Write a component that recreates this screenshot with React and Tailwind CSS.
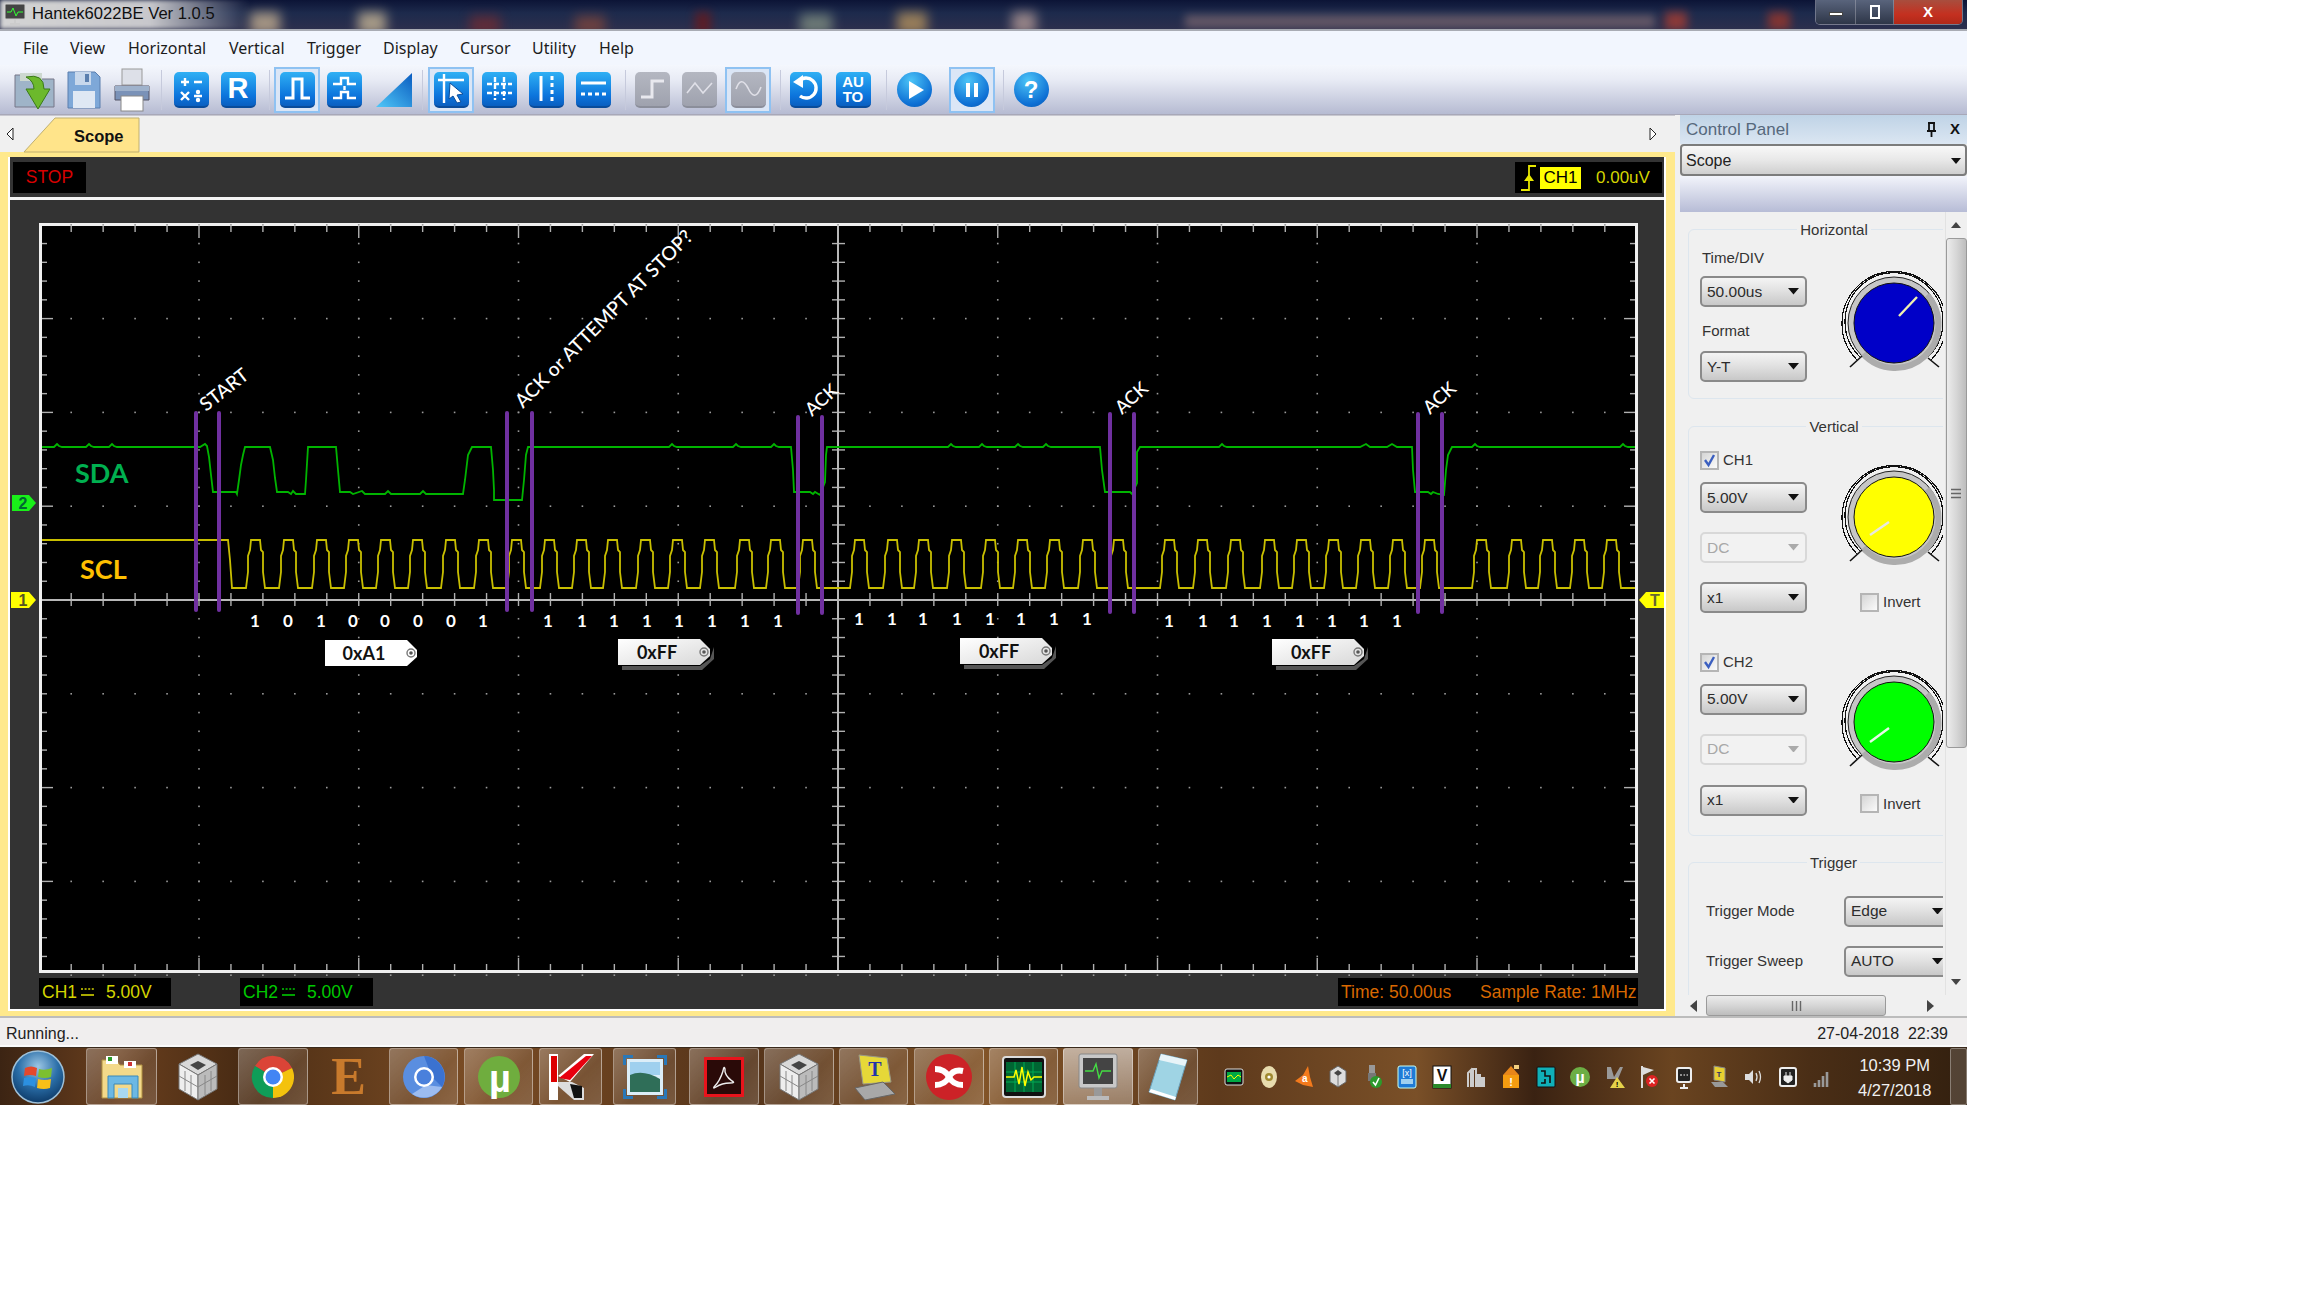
import React from "react";

const Arrow = ({ c = "#111", s = 14 }) => (
  <svg width={s} height={s * 0.6} viewBox="0 0 10 6" className="shrink-0"><polygon points="0,0 10,0 5,6" fill={c} /></svg>
);

const Sel = ({ label, disabled, w = "w-[107px]" }) => (
  <div className={`${w} h-[31px] shrink-0 flex items-center justify-between pl-[5px] pr-[6px] rounded-[5px] border-2 text-[15.5px] ${disabled ? "border-[#d8d8d8] bg-[#f2f2f2] text-[#a8a8a8]" : "border-[#8a8a8a] bg-[linear-gradient(#f4f4f4,#e2e2e2_45%,#c8c8c8)] text-[#2c2c2c]"}`}>
    <span>{label}</span>
    <Arrow c={disabled ? "#aaa" : "#111"} s={11} />
  </div>
);

const Check = ({ on }) => (
  <div className="w-[19px] h-[19px] shrink-0 border-2 border-[#b5b5b5] bg-[linear-gradient(135deg,#d5d5d5,#fbfbfb)] flex items-center justify-center">
    {on && <svg width="15" height="15" viewBox="0 0 15 15"><path d="M3 7 L6.5 12 L12 2" fill="none" stroke="#3b5fc0" strokeWidth="2.4" /></svg>}
  </div>
);

const Knob = ({ color, px1, py1, px2, py2, pc = "#f1f1f1" }) => (
  <svg width="116" height="116" viewBox="-58 -58 116 116" className="block shrink-0">
    <g fill="none" shapeRendering="crispEdges">
      <path d="M-34 34 A49 49 0 1 1 34 34" stroke="#111" strokeWidth="1.2" />
      <path d="M-37 37 A52 52 0 1 1 37 37" stroke="#111" strokeWidth="1.2" />
    </g>
    <circle r="46" fill="#c6c6c6" stroke="#222" strokeWidth="1" />
    <path d="M-31 31 A43 43 0 0 0 33 -28" fill="none" stroke="#acacac" strokeWidth="6" />
    <circle r="40" fill={color} stroke="#111" strokeWidth="1" />
    <line x1="-32" y1="33" x2="-44" y2="44" stroke="#111" strokeWidth="1.6" />
    <line x1="34" y1="35" x2="45" y2="44" stroke="#111" strokeWidth="1.6" />
    <line x1={px1} y1={py1} x2={px2} y2={py2} stroke={pc} strokeWidth="2.4" />
  </svg>
);

const Blue = ({ children, gray }) => (
  <div className={`w-[35px] h-[36px] rounded-[5px] flex items-center justify-center border-b-2 ${gray ? "bg-[linear-gradient(#b4b7c1,#9fa2ae)] border-[#8b8e9a]" : "bg-[linear-gradient(#2fb0f4,#0c74dc_70%,#0a5fc0)] border-[#0a4c9a]"}`}>
    {children}
  </div>
);
const I = ({ children }) => <svg width="31" height="31" viewBox="0 0 31 31" fill="none" stroke="#fff" strokeWidth="2.4">{children}</svg>;
const Frame = ({ children }) => (
  <div className="w-[46px] h-[46px] shrink-0 border-2 border-[#8fc2f2] bg-[#dbe6f6] flex items-center justify-center">{children}</div>
);
const Sep = ({ w }) => <div className={`${w} shrink-0 flex justify-center`}><div className="w-px h-[40px] bg-[#c6cadc]" /></div>;
const Slot = ({ w, children }) => <div className={`${w} shrink-0 flex justify-center`}>{children}</div>;

const Orb = ({ children }) => (
  <div className="w-[35px] h-[35px] rounded-full bg-[radial-gradient(circle_at_40%_25%,#4cc4f7,#0d6fd4_70%,#0a55a8)] flex items-center justify-center">{children}</div>
);

const majorYs = [-4, -3, -2, -1, 0, 1, 2, 3, 4].map((k) => 600 + k * 93.8);
const minorYs = Array.from({ length: 41 }, (_, i) => 600 + (i - 20) * 18.76).filter((y) => y > 226 && y < 970);
const majorXs = Array.from({ length: 11 }, (_, i) => 838 + (i - 5) * 159.75).filter((x) => x > 42 && x < 1635);
const minorXs = Array.from({ length: 51 }, (_, i) => 838 + (i - 25) * 31.95).filter((x) => x > 42 && x < 1635);

const sclCenters = [256, 289, 322, 354, 386, 418, 451, 484, 517, 550, 582, 613, 646, 678, 710, 745, 776, 808, 860, 893, 924, 957, 991, 1023, 1055, 1088, 1119, 1170, 1203, 1236, 1270, 1302, 1334, 1366, 1398, 1430, 1482, 1517, 1548, 1580, 1612];
const scl = "M42 540 L228 540 L230 560 L232 588 " + sclCenters.map((c) => `L${c - 10} 588 L${c - 8} 572 L${c - 8} 556 L${c - 6} 550 L${c - 5} 540 L${c + 4} 540 L${c + 5} 550 L${c + 7} 552 L${c + 7} 572 L${c + 9} 588`).join(" ") + " L1635 588";
const b = (x) => `L${x - 4} 447 L${x - 1} 444 L${x + 1} 446 L${x + 4} 447`;
const sda = `M42 447 ${b(58)} ${b(90)} ${b(113)} L200 447 L205 444 L207 446 L209 457 L211 475 L213 492 L236 492 L237 494 L239 480 L241 465 L243 455 L245 447 L270 447 L273 460 L275 478 L277 492 L288 492 L291 494 L293 491 L296 494 L305 494 L306 480 L308 447 L336 447 L338 470 L340 492 L350 492 L353 494 L362 491 L365 494 L385 494 L388 491 L391 494 L420 494 L423 491 L426 494 L463 494 L465 480 L468 455 L472 447 L491 447 L493 470 L494 490 L494 500 L522 500 L524 480 L526 455 L528 447 ${b(673)} ${b(737)} ${b(775)} L791 447 L793 470 L794 492 L810 492 L813 494 L815 492 L820 495 L825 482 L826 455 L827 447 ${b(952)} ${b(983)} ${b(1019)} ${b(1047)} L1100 447 L1102 470 L1105 492 L1130 492 L1132 494 L1137 483 L1137 452 L1140 447 ${b(1223)} L1360 447 L1366 444 L1370 447 L1387 447 L1392 444 L1397 447 L1412 447 L1413 470 L1415 492 L1428 492 L1431 494 L1433 492 L1438 494 L1444 495 L1446 470 L1448 455 L1452 447 ${b(1476)} ${b(1624)} L1635 447`;

const digits = [
  ...[[255, "1"], [288, "0"], [321, "1"], [353, "0"], [385, "0"], [418, "0"], [451, "0"], [483, "1"]].map(([x, t]) => [x, 627, t]),
  ...[548, 582, 614, 647, 679, 712, 745, 778].map((x) => [x, 627, "1"]),
  ...[859, 892, 923, 957, 990, 1021, 1054, 1087].map((x) => [x, 625, "1"]),
  ...[1169, 1203, 1234, 1267, 1300, 1332, 1364, 1397].map((x) => [x, 627, "1"]),
];

const purple = [[196, 413, 610], [219, 413, 610], [507, 413, 610], [532, 413, 610], [798, 417, 613], [822, 417, 613], [1110, 414, 612], [1134, 414, 612], [1418, 414, 612], [1442, 414, 612]];

const Tag = ({ x, y, t, shadow }) => (
  <g>
    {shadow && <polygon points={`${x + 4},${y + 27} ${x + 4},${y + 31} ${x + 84},${y + 31} ${x + 96},${y + 20} ${x + 96},${y + 8} ${x + 92},${y + 20} ${x + 82},${y + 27}`} fill="#555" />}
    <polygon points={`${x},${y} ${x + 82},${y} ${x + 92},${y + 10} ${x + 92},${y + 17} ${x + 82},${y + 26} ${x},${y + 26}`} fill={shadow ? "url(#tagg)" : "#fff"} />
    <circle cx={x + 86} cy={y + 13} r="4" fill="none" stroke="#777" strokeWidth="1.4" />
    <circle cx={x + 86} cy={y + 13} r="1.8" fill="#555" />
    <text x={x + 39} y={y + 19.5} textAnchor="middle" fill="#111" className="font-['Lato',sans-serif] font-bold text-[18px]">{t}</text>
  </g>
);

const Scope = () => (
  <svg viewBox="42 226 1593 744" className="block w-[1593px] h-[744px] overflow-visible bg-black">
    <defs>
      <linearGradient id="tagg" x1="0" x2="1" y1="0" y2="1"><stop offset="0" stopColor="#fff" /><stop offset="1" stopColor="#d8d8d8" /></linearGradient>
    </defs>
    {majorYs.map((y) => minorXs.map((x) => <rect key={`a${x}${y}`} x={x - 0.8} y={y - 0.8} width="1.6" height="1.6" fill="#9a9a9a" />))}
    {majorXs.map((x) => minorYs.map((y) => <rect key={`b${x}${y}`} x={x - 0.8} y={y - 0.8} width="1.6" height="1.6" fill="#9a9a9a" />))}
    {minorXs.map((x) => {
      const major = Math.abs(((x - 838) / 31.95) % 5) < 0.01;
      const l = major ? 12 : 6;
      return (
        <g key={x} stroke="#b0b0b0" strokeWidth="1.4">
          <line x1={x} x2={x} y1={226} y2={226 + l} />
          <line x1={x} x2={x} y1={970 - l} y2={970} />
          <line x1={x} x2={x} y1={593} y2={606} />
        </g>
      );
    })}
    {minorYs.map((y) => {
      const major = Math.abs(((y - 600) / 18.76) % 5) < 0.01;
      const l = major ? 11 : 5;
      return (
        <g key={y} stroke="#b0b0b0" strokeWidth="1.4">
          <line y1={y} y2={y} x1={42} x2={42 + l} />
          <line y1={y} y2={y} x1={1635 - l} x2={1635} />
          <line y1={y} y2={y} x1={832} x2={845} />
        </g>
      );
    })}
    <line x1="42" x2="1635" y1="600" y2="600" stroke="#b8b8b8" strokeWidth="2" />
    <line x1="838" x2="838" y1="226" y2="970" stroke="#b8b8b8" strokeWidth="2" />

    <path d={scl} fill="none" stroke="#c8be00" strokeWidth="1.8" />
    <path d={sda} fill="none" stroke="#00b400" strokeWidth="1.8" />

    {purple.map(([x, a, c]) => <line key={x} x1={x} x2={x} y1={a} y2={c} stroke="#7030a0" strokeWidth="4" strokeLinecap="round" />)}

    <g className="font-['Lato',sans-serif]">
      <text x="75" y="483" fill="#00b050" className="font-bold text-[27px]">SDA</text>
      <text x="80" y="579" fill="#ffc000" className="font-bold text-[27px]">SCL</text>
      <text transform="translate(206 412) rotate(-38)" fill="#fff" className="font-medium text-[19px]">START</text>
      <text transform="translate(523 409) rotate(-45)" fill="#fff" className="font-medium text-[19.4px]">ACK or ATTEMPT AT STOP?</text>
      <text transform="translate(812 417) rotate(-42)" fill="#fff" className="font-medium text-[18.5px]">ACK</text>
      <text transform="translate(1122 415) rotate(-42)" fill="#fff" className="font-medium text-[18.5px]">ACK</text>
      <text transform="translate(1430 415) rotate(-42)" fill="#fff" className="font-medium text-[18.5px]">ACK</text>
      {digits.map(([x, y, t], i) => <text key={i} x={x} y={y} textAnchor="middle" fill="#fff" className="font-bold text-[17px]">{t}</text>)}
    </g>

    <Tag x={325} y={640} t="0xA1" />
    <Tag x={618} y={639} t="0xFF" shadow />
    <Tag x={960} y={638} t="0xFF" shadow />
    <Tag x={1272} y={639} t="0xFF" shadow />

    <g className="font-['Liberation_Sans',sans-serif] text-[16px] font-bold">
      <polygon points="12,495 29,495 36,503 29,511 12,511" fill="#19f019" />
      <text x="23" y="509" textAnchor="middle" fill="#063">2</text>
      <polygon points="11,592 29,592 36,600 29,608 11,608" fill="#ffff00" />
      <text x="23" y="606" textAnchor="middle" fill="#552">1</text>
      <polygon points="1664,592 1646,592 1639,600 1646,608 1664,608" fill="#ffff00" />
      <text x="1655" y="606" textAnchor="middle" fill="#663">T</text>
    </g>
  </svg>
);

const Dc = ({ c }) => (
  <svg width="15" height="10" viewBox="0 0 15 10" className="mx-[3px]">
    <path d="M1 2 H14" stroke={c} strokeWidth="1.6" strokeDasharray="2 1.6" /><path d="M1 8 H14" stroke={c} strokeWidth="1.6" />
  </svg>
);

const TaskBtn = ({ w, children, lit }) => (
  <div className={`${w} h-[57px] shrink-0 rounded-[3px] border border-[#ffffff60] flex items-center justify-center ${lit ? "bg-[linear-gradient(#ffffff90,#ffffff50)]" : "bg-[linear-gradient(135deg,#ffffff48,#ffffff18_60%,#ffffff28)]"}`}>{children}</div>
);

const Cube = () => (
  <svg width="42" height="48" viewBox="0 0 42 48">
    <polygon points="21,1 40,11 21,22 2,11" fill="#d8d8d8" stroke="#777" />
    <polygon points="2,11 21,22 21,47 2,36" fill="#eee" stroke="#777" />
    <polygon points="40,11 21,22 21,47 40,36" fill="#bbb" stroke="#777" />
    <polygon points="21,8 29,12 21,17 13,12" fill="#444" />
    <path d="M8 18 V38 M14 22 V42 M28 22 V42 M34 18 V38 M2 23 L21 34 L40 23" stroke="#888" strokeWidth="1" fill="none" />
  </svg>
);

const TB = ({ children, w = 20 }) => <svg width={w} height="24" viewBox="0 0 20 24">{children}</svg>;
const tray = [
  <TB><rect x="1" y="4" width="18" height="16" rx="2" fill="#111" stroke="#ddd" /><rect x="3" y="7" width="14" height="10" fill="#0a4" /><path d="M3 12 L7 10 L10 14 L14 10 L17 12" stroke="#ff0" fill="none" /></TB>,
  <TB><ellipse cx="10" cy="12" rx="8" ry="11" fill="#e8dcae" /><circle cx="10" cy="12" r="4" fill="#a08a30" /><circle cx="10" cy="12" r="1.6" fill="#fff" /></TB>,
  <TB><path d="M2 16 L10 10 L15 1 L17 12 L20 22 L10 20 Z" fill="#f47a1c" /><text x="9" y="17" fontSize="10" fill="#fff" fontWeight="700">a</text></TB>,
  <TB><polygon points="10,1 18,6 18,17 10,22 2,17 2,6" fill="#ddd" stroke="#666" /><polygon points="10,5 14,8 10,11 6,8" fill="#444" /><path d="M10 11 V22" stroke="#777" /></TB>,
  <TB><rect x="6" y="0" width="6" height="13" fill="#999" /><rect x="5" y="8" width="8" height="8" fill="#777" /><circle cx="13" cy="17" r="6" fill="#2c9a2c" /><path d="M10 17 L12.5 20 L16 13" stroke="#fff" strokeWidth="1.6" fill="none" /></TB>,
  <TB><rect x="1" y="1" width="18" height="22" rx="2" fill="#1f7bd6" stroke="#cfe" /><text x="10" y="11" textAnchor="middle" fontSize="9" fill="#fff">[x]</text><rect x="4" y="14" width="12" height="5" fill="#a0d0f0" /></TB>,
  <TB><rect x="1" y="1" width="18" height="22" fill="#fff" stroke="#111" /><text x="10" y="16" textAnchor="middle" fontSize="16" fontWeight="700" fill="#111">V</text><rect x="1" y="19" width="18" height="4" fill="#2a8a2a" /></TB>,
  <TB><path d="M2 22 V8 L5 5 V22 M7 22 V4 H10 V22 M12 22 V10 H14 V22 M16 22 V13 H18 V22" stroke="#ccc" strokeWidth="2" fill="none" /></TB>,
  <TB><rect x="2" y="10" width="16" height="13" fill="#f59c10" /><polygon points="10,1 18,10 2,10" fill="#e8861a" /><rect x="13" y="0" width="5" height="4" fill="#f4d080" /><text x="10" y="21" textAnchor="middle" fontSize="11" fontWeight="700" fill="#fff">!</text></TB>,
  <TB><rect x="1" y="2" width="18" height="20" rx="1" fill="#10b0b8" stroke="#111" /><path d="M5 6 H9 V11 H14 V18 M5 18 H9 V14" stroke="#111" strokeWidth="1.6" fill="none" /></TB>,
  <TB><circle cx="10" cy="12" r="10" fill="#6cae44" /><text x="10" y="18" textAnchor="middle" fontSize="16" fontWeight="700" fill="#fff">µ</text></TB>,
  <TB><path d="M2 2 H6 L9 12 L15 2 H18 L13 14 H2 Z" fill="#999" /><polygon points="12,12 20,23 5,23" fill="#e6d24a" /><text x="12" y="22" textAnchor="middle" fontSize="8" fontWeight="700">!</text></TB>,
  <TB><path d="M3 1 V23" stroke="#ddd" strokeWidth="2" /><polygon points="4,2 15,5 4,10" fill="#ddd" /><circle cx="13" cy="16" r="6" fill="#d22" /><path d="M10.5 13.5 L15.5 18.5 M15.5 13.5 L10.5 18.5" stroke="#fff" strokeWidth="1.6" /></TB>,
  <TB><rect x="3" y="3" width="14" height="14" rx="2" fill="#222" stroke="#eee" strokeWidth="2" /><path d="M6 10 H8 M9.5 10 H11 M12.5 10 H14" stroke="#fff" /><path d="M10 19 V23 M6 23 H14" stroke="#eee" strokeWidth="2" /></TB>,
  <TB><polygon points="5,1 16,3 16,17 5,15" fill="#e8d030" stroke="#888" /><polygon points="2,17 14,17 19,22 6,22" fill="#999" /><text x="10" y="12" textAnchor="middle" fontSize="8" fontWeight="700" fill="#336">T</text></TB>,
  <TB><polygon points="2,9 6,9 10,5 10,19 6,15 2,15" fill="#ddd" /><path d="M13 8 Q15 12 13 16 M16 6 Q19 12 16 18" stroke="#ddd" strokeWidth="1.3" fill="none" /></TB>,
  <TB><rect x="2" y="3" width="16" height="18" rx="2" fill="#222" stroke="#eee" strokeWidth="2" /><path d="M8 7 V11 M12 7 V11 M6 11 H14 V15 L10 18 L6 15 Z" fill="#eee" stroke="#eee" /></TB>,
  <TB><path d="M3 22 V18 M7 22 V15 M11 22 V11 M15 22 V7" stroke="#999" strokeWidth="2.6" /></TB>,
];

export default function App() {
  return (
    <div className="w-[2304px] h-[1296px] bg-white overflow-hidden font-['Liberation_Sans',sans-serif]">
      <div className="w-[1967px] flex flex-col">
        {/* title bar */}
        <div className="relative h-[31px] shrink-0 flex overflow-hidden border-b-2 border-[#a9acb4] bg-[linear-gradient(#0c1436,#1d2a4c_45%,#2c2f4d)]">
          <div className="absolute left-0 top-0 h-full w-[250px] bg-[linear-gradient(90deg,#d4d4d4,#c8c8cc_60%,#c8c8cc00)] blur-[2px]" />
          <div className="absolute left-[250px] top-[12px] w-[30px] h-[22px] bg-[#d9c09a] blur-[6px] opacity-70" />
          <div className="absolute left-[358px] top-[12px] w-[28px] h-[22px] bg-[#dcc8a0] blur-[6px] opacity-70" />
          <div className="absolute left-[470px] top-[16px] w-[30px] h-[18px] bg-[#7a2c30] blur-[6px] opacity-70" />
          <div className="absolute left-[575px] top-[16px] w-[30px] h-[18px] bg-[#8a4a3a] blur-[6px] opacity-70" />
          <div className="absolute left-[695px] top-[12px] w-[16px] h-[22px] bg-[#701818] blur-[5px] opacity-70" />
          <div className="absolute left-[800px] top-[14px] w-[32px] h-[20px] bg-[#8a9a88] blur-[6px] opacity-70" />
          <div className="absolute left-[897px] top-[12px] w-[30px] h-[22px] bg-[#c8a060] blur-[6px] opacity-70" />
          <div className="absolute left-[1012px] top-[12px] w-[24px] h-[22px] bg-[#c4a8a0] blur-[6px] opacity-70" />
          <div className="absolute left-[1185px] top-[15px] w-[470px] h-[13px] bg-[#8e7478] blur-[4px] opacity-60" />
          <div className="absolute left-[1665px] top-[12px] w-[22px] h-[18px] bg-[#b84030] blur-[5px] opacity-70" />
          <div className="absolute left-[1768px] top-[12px] w-[22px] h-[18px] bg-[#a83828] blur-[5px] opacity-70" />
          <div className="relative flex items-center pl-[3px] gap-[5px]">
            <svg width="24" height="26" viewBox="0 0 24 26"><rect x="2" y="2" width="20" height="15" rx="1" fill="#444" stroke="#ccc" /><path d="M4 10 L8 10 L10 6 L13 14 L15 10 L20 10" stroke="#3f3" fill="none" /><path d="M12 17 V21 M7 22 H17" stroke="#ccc" strokeWidth="2" /></svg>
            <span className="text-[16.6px] text-[#101010]">Hantek6022BE Ver 1.0.5</span>
          </div>
          <div className="relative ml-auto mr-[4px] flex h-[25px] rounded-b-[5px] border border-t-0 border-[#c4c4cc80] overflow-hidden">
            <div className="w-[40px] flex items-center justify-center bg-[linear-gradient(#59647c,#2e3648)] border-r border-[#c4c4cc60]"><div className="w-[14px] h-[4px] mt-[4px] bg-white border border-[#444]" /></div>
            <div className="w-[38px] flex items-center justify-center bg-[linear-gradient(#59647c,#2e3648)] border-r border-[#c4c4cc60]"><div className="w-[10px] h-[14px] border-2 border-white" /></div>
            <div className="w-[68px] flex items-center justify-center bg-[linear-gradient(#a84e3e,#c43020_60%,#b02818)] text-white font-bold text-[15px]">X</div>
          </div>
        </div>

        {/* menu */}
        <div className="h-[34px] shrink-0 flex items-center pl-[23px] bg-[#f2f6fe] text-[16px] text-[#1c1c1c] font-['Noto_Sans',sans-serif]">
          <span className="w-[47px]">File</span>
          <span className="w-[58px]">View</span>
          <span className="w-[101px]">Horizontal</span>
          <span className="w-[78px]">Vertical</span>
          <span className="w-[76px]">Trigger</span>
          <span className="w-[77px]">Display</span>
          <span className="w-[72px]">Cursor</span>
          <span className="w-[67px]">Utility</span>
          <span>Help</span>
        </div>

        {/* toolbar */}
        <div className="h-[50px] shrink-0 flex items-center pl-[10px] border-b border-[#a8a8b8] bg-[linear-gradient(#f4f7fd,#e8ebf5_30%,#b6bbd2)]">
          <Slot w="w-[50px]">
            <svg width="46" height="42" viewBox="0 0 46 42"><path d="M3 6 H16 L20 10 H42 V38 H3 Z" fill="#9fb4c8" stroke="#778" /><path d="M8 4 H30 V12 H8Z" fill="#cdd8d0" /><path d="M14 8 Q32 4 32 20 H38 L26 40 L14 20 H22 Q22 12 14 8 Z" fill="#6cb92c" stroke="#3a7a18" /></svg>
          </Slot>
          <Slot w="w-[48px]">
            <svg width="36" height="42" viewBox="0 0 36 42"><path d="M2 3 H29 L34 8 V39 H2 Z" fill="#7ea8d8" stroke="#5b7fae" /><rect x="9" y="3" width="16" height="13" fill="#c8d8ec" /><rect x="19" y="5" width="4" height="8" fill="#5b7fae" /><rect x="7" y="22" width="22" height="17" fill="#dfe8f4" /></svg>
          </Slot>
          <Slot w="w-[48px]">
            <svg width="40" height="44" viewBox="0 0 40 44"><rect x="10" y="1" width="20" height="16" fill="#dde0e8" stroke="#999" /><path d="M3 18 H37 V32 H3 Z" fill="#7a92b8" stroke="#556" /><rect x="3" y="18" width="34" height="5" fill="#9fb2cc" /><rect x="9" y="28" width="22" height="15" fill="#fff" stroke="#888" /></svg>
          </Slot>
          <Sep w="w-[10px]" />
          <Slot w="w-[50px]"><Blue><I><path d="M5 9 H13 M9 5 V13 M18 9 H26 M5 19 L13 27 M13 19 L5 27 M18 23 H26" /><circle cx="22" cy="19" r="1" fill="#fff" /><circle cx="22" cy="27" r="1" fill="#fff" /></I></Blue></Slot>
          <Slot w="w-[44px]"><Blue><span className="text-white font-bold text-[29px] leading-none">R</span></Blue></Slot>
          <Sep w="w-[18px]" />
          <Slot w="w-[38px]"><Frame><Blue><I><path d="M3 25 H11 V6 H20 V25 H28" strokeWidth="3" /></I></Blue></Frame></Slot>
          <Slot w="w-[56px]"><Blue><I><path d="M4 11 H12 V5 H19 V11 H27" /><path d="M15.5 13 V17" /><path d="M4 25 H12 V19 H19 V25 H27" /></I></Blue></Slot>
          <Slot w="w-[44px]">
            <svg width="38" height="36" viewBox="0 0 38 36"><defs><linearGradient id="ramp" x1="0" x2="1" y1="1" y2="0"><stop offset="0" stopColor="#50c8f8" /><stop offset="1" stopColor="#0a5cc0" /></linearGradient></defs><polygon points="1,35 37,1 37,35" fill="url(#ramp)" /></svg>
          </Slot>
          <Sep w="w-[12px]" />
          <Slot w="w-[46px]"><Frame><Blue><I><path d="M2 7 H28 M8 1 V30" strokeWidth="2.4" /><path d="M14 10 L27 21 L21 22 L25 29 L21 30 L17 23 L13 26 Z" fill="#fff" stroke="#0a4c9a" strokeWidth="1" /></I></Blue></Frame></Slot>
          <Slot w="w-[50px]"><Blue><I><path d="M11 4 V27 M20 4 V27 M3 11 H28 M3 20 H28" strokeDasharray="5 2" /></I></Blue></Slot>
          <Slot w="w-[44px]"><Blue><I><path d="M10 3 V28" strokeWidth="3" /><path d="M21 3 V28" strokeWidth="3" strokeDasharray="4 3" /></I></Blue></Slot>
          <Slot w="w-[50px]"><Blue><I><path d="M3 10 H28" strokeWidth="3" /><path d="M3 21 H28" strokeWidth="3" strokeDasharray="4 3" /></I></Blue></Slot>
          <Sep w="w-[14px]" />
          <Slot w="w-[40px]"><Blue gray><I><path d="M4 24 H15 V8 H27" stroke="#e8e8ee" strokeWidth="3" /></I></Blue></Slot>
          <Slot w="w-[54px]"><Blue gray><I><path d="M3 20 L11 10 L19 20 L28 10" stroke="#e0e0e8" strokeWidth="1.6" /></I></Blue></Slot>
          <Slot w="w-[44px]"><Frame><Blue gray><I><path d="M3 16 Q8 2 15 15 Q22 30 28 14" stroke="#e0e0e8" strokeWidth="1.6" /></I></Blue></Frame></Slot>
          <Sep w="w-[20px]" />
          <Slot w="w-[32px]"><Blue><I><path d="M8 8 A10 10 0 1 1 9 23" strokeWidth="3.4" /><polygon points="2,9 12,2 12,15" fill="#fff" stroke="none" /></I></Blue></Slot>
          <Slot w="w-[62px]"><Blue><span className="text-white font-bold text-[15px] leading-[15px] text-center">AU<br />TO</span></Blue></Slot>
          <Sep w="w-[4px]" />
          <Slot w="w-[53px]"><Orb><svg width="22" height="22" viewBox="0 0 22 22"><polygon points="5,2 20,11 5,20" fill="#fff" /></svg></Orb></Slot>
          <Slot w="w-[61px]"><Frame><Orb><svg width="18" height="18" viewBox="0 0 18 18"><rect x="3" y="2" width="4" height="14" fill="#fff" /><rect x="11" y="2" width="4" height="14" fill="#fff" /></svg></Orb></Frame></Slot>
          <Sep w="w-[2px]" />
          <Slot w="w-[54px]"><Orb><span className="text-white font-bold text-[24px] leading-none">?</span></Orb></Slot>
        </div>

        {/* main */}
        <div className="h-[903px] shrink-0 flex">
          {/* left */}
          <div className="w-[1675px] shrink-0 flex flex-col">
            <div className="relative h-[37px] shrink-0 flex items-center justify-between px-[6px] bg-[#f0f0f0] border-t border-[#c8c8d0]">
              <svg width="8" height="14" viewBox="0 0 8 14"><path d="M7 1 L1 7 L7 13 Z" fill="#fff" stroke="#222" /></svg>
              <svg width="40" height="36" viewBox="0 0 40 36" className="absolute left-[23px] bottom-0 overflow-visible"><path d="M1 36 L32 2 H116 V36 Z" fill="#ffe48a" stroke="#c0b070" /></svg>
              <span className="absolute left-[74px] top-[8px] text-[16.5px] font-bold text-[#111]">Scope</span>
              <svg width="8" height="14" viewBox="0 0 8 14" className="mr-[12px]"><path d="M1 1 L7 7 L1 13 Z" fill="#fff" stroke="#222" /></svg>
            </div>
            <div className="flex-1 flex flex-col pl-[2px] pr-[3px] border-b-2 border-[#bcbcbc] bg-[#ffe98c]">
              <div className="h-[5px] shrink-0" />
              <div className="flex-1 ml-[6px] mr-[6px] mb-[5px] flex flex-col bg-[#333] border-x-2 border-b-2 border-white">
                <div className="h-[40px] shrink-0 flex items-start justify-between pt-[5px] pl-[3px] pr-[2px]">
                  <div className="w-[73px] h-[31px] bg-black flex items-center justify-center text-[#d80000] text-[17.5px]">STOP</div>
                  <div className="w-[147px] h-[31px] bg-black flex items-center pl-[4px]">
                    <svg width="20" height="28" viewBox="0 0 20 28"><path d="M2 26 H10 V2 H17" fill="none" stroke="#e8e800" strokeWidth="1.8" /><polygon points="10,10 5,17 15,17" fill="#e8e800" /></svg>
                    <span className="ml-[1px] w-[41px] h-[22px] bg-[#ffff00] text-black text-[17px] flex items-center justify-center">CH1</span>
                    <span className="ml-[15px] text-[#d4d400] text-[17px]">0.00uV</span>
                  </div>
                </div>
                <div className="h-[3px] shrink-0 bg-[#f4f4f4]" />
                <div className="h-[23px] shrink-0" />
                <div className="ml-[29px] w-[1599px] shrink-0 border-[3px] border-[#f0f0f0]">
                  <Scope />
                </div>
                <div className="flex-1 flex items-start justify-between pt-[5px] pl-[29px] pr-[26px]">
                  <div className="flex gap-[69px]">
                    <div className="w-[132px] h-[28px] bg-black flex items-center pl-[3px] text-[17.5px] text-[#d4d400]">CH1<Dc c="#d4d400" /><span className="ml-[8px]">5.00V</span></div>
                    <div className="w-[133px] h-[28px] bg-black flex items-center pl-[3px] text-[17.5px] text-[#00c800]">CH2<Dc c="#00c800" /><span className="ml-[8px]">5.00V</span></div>
                  </div>
                  <div className="w-[300px] h-[28px] bg-black flex items-center pl-[3px] text-[17.5px] text-[#d86800]">
                    <span className="w-[139px]">Time: 50.00us</span><span>Sample Rate: 1MHz</span>
                  </div>
                </div>
              </div>
            </div>
          </div>

          {/* right panel */}
          <div className="w-[292px] shrink-0 flex flex-col pl-[5px] border-b-2 border-[#bcbcbc] bg-[#f0f0f0]">
            <div className="h-[29px] shrink-0 flex items-center justify-between pl-[6px] pr-[7px] bg-[linear-gradient(#bfd3e6,#dbe6f2)] text-[#56687c] text-[17px]">
              <span>Control Panel</span>
              <span className="flex items-center gap-[13px] text-[#111] font-bold text-[15px]">
                <svg width="11" height="15" viewBox="0 0 11 15"><path d="M2 1 H9 M3 1 V9 M8 1 V9 M1 9 H10 M5.5 9 V15" stroke="#111" strokeWidth="1.8" fill="none" /></svg>
                X
              </span>
            </div>
            <div className="h-[32px] shrink-0 flex items-center justify-between px-[4px] pt-[2px] rounded-[4px] border-2 border-[#7c7c7c] bg-[linear-gradient(#f8f8f8,#e8e8e8_50%,#cfcfcf)] text-[16px] text-[#222]">
              <span>Scope</span><Arrow s={10} />
            </div>
            <div className="h-[36px] shrink-0 bg-[linear-gradient(#f2f4fb,#b7bcd6)]" />
            <div className="h-[783px] shrink-0 flex overflow-hidden">
              <div className="w-[263px] shrink-0 overflow-hidden pl-[8px] text-[15px] text-[#333]">
                <fieldset className="mt-[9px] w-[281px] border border-[#dde6ee] rounded-[6px] pl-[11px]">
                  <legend className="mx-auto px-[3px] leading-[17px] text-[15px]">Horizontal</legend>
                  <div className="flex items-start">
                    <div className="flex flex-col w-[107px] shrink-0">
                      <div className="mt-[11px] h-[18px] leading-[18px] pl-[2px] text-[15px]">Time/DIV</div>
                      <div className="mt-[9px]"><Sel label="50.00us" /></div>
                      <div className="mt-[15px] h-[18px] leading-[18px] pl-[2px] text-[15px]">Format</div>
                      <div className="mt-[11px] mb-[16px]"><Sel label="Y-T" /></div>
                    </div>
                    <div className="ml-[29px] mt-[27px]"><Knob color="#0000c8" px1={5} py1={-7} px2={23} py2={-26} pc="#f0f0b0" /></div>
                  </div>
                </fieldset>

                <fieldset className="mt-[19px] w-[281px] border border-[#dde6ee] rounded-[6px] pl-[11px]">
                  <legend className="mx-auto px-[3px] leading-[17px] text-[15px]">Vertical</legend>
                  <div className="flex items-start mt-[16px]">
                    <div className="flex flex-col w-[107px] shrink-0">
                      <div className="flex items-center gap-[4px] h-[18px] text-[15px]"><Check on />CH1</div>
                      <div className="mt-[13px]"><Sel label="5.00V" /></div>
                      <div className="mt-[19px]"><Sel label="DC" disabled /></div>
                      <div className="mt-[19px]"><Sel label="x1" /></div>
                    </div>
                    <div className="ml-[29px] mt-[8px] flex flex-col">
                      <Knob color="#ffff00" px1={-24} py1={18} px2={-5} py2={5} pc="#e8e8e0" />
                      <div className="ml-[24px] mt-[16px] flex items-center gap-[4px] text-[15px]"><Check />Invert</div>
                    </div>
                  </div>
                  <div className="flex items-start mt-[40px] mb-[19px]">
                    <div className="flex flex-col w-[107px] shrink-0">
                      <div className="flex items-center gap-[4px] h-[18px] text-[15px]"><Check on />CH2</div>
                      <div className="mt-[12px]"><Sel label="5.00V" /></div>
                      <div className="mt-[19px]"><Sel label="DC" disabled /></div>
                      <div className="mt-[20px]"><Sel label="x1" /></div>
                    </div>
                    <div className="ml-[29px] mt-[10px] flex flex-col">
                      <Knob color="#00ff00" px1={-24} py1={20} px2={-5} py2={6} pc="#e8f8e8" />
                      <div className="ml-[24px] mt-[13px] flex items-center gap-[4px] text-[15px]"><Check />Invert</div>
                    </div>
                  </div>
                </fieldset>

                <fieldset className="mt-[18px] w-[274px] border border-[#dde6ee] rounded-[6px] pl-[17px] h-[200px]">
                  <legend className="mx-auto px-[3px] leading-[17px] text-[15px]">Trigger</legend>
                  <div className="flex items-center mt-[25px]"><span className="w-[138px] text-[15px]">Trigger Mode</span><Sel label="Edge" /></div>
                  <div className="flex items-center mt-[19px]"><span className="w-[138px] text-[15px]">Trigger Sweep</span><Sel label="AUTO" /></div>
                </fieldset>
              </div>
              <div className="w-[21px] ml-[2px] shrink-0 flex flex-col items-center bg-[#f0f0f0] border-l border-[#e2e2e2]">
                <div className="h-[26px] flex items-center"><svg width="10" height="6" viewBox="0 0 10 6"><polygon points="0,6 10,6 5,0" fill="#444" /></svg></div>
                <div className="w-[21px] h-[510px] flex items-center justify-center rounded-[3px] border border-[#9a9a9a] bg-[linear-gradient(90deg,#ececec,#d6d6d6_50%,#bdbdbd)]">
                  <svg width="10" height="11" viewBox="0 0 10 11"><path d="M0 1.5 H10 M0 5.5 H10 M0 9.5 H10" stroke="#666" strokeWidth="1.4" /></svg>
                </div>
                <div className="mt-auto h-[26px] flex items-center"><Arrow c="#444" s={10} /></div>
              </div>
            </div>
            <div className="h-[21px] shrink-0 flex items-center pl-[9px] bg-[#f0f0f0]">
              <svg width="8" height="12" viewBox="0 0 8 12"><polygon points="8,0 8,12 1,6" fill="#444" /></svg>
              <div className="ml-[9px] w-[180px] h-[21px] flex items-center justify-center rounded-[3px] border border-[#9a9a9a] bg-[linear-gradient(#ececec,#d6d6d6_50%,#bdbdbd)]">
                <svg width="11" height="10" viewBox="0 0 11 10"><path d="M1.5 0 V10 M5.5 0 V10 M9.5 0 V10" stroke="#666" strokeWidth="1.4" /></svg>
              </div>
              <svg width="8" height="12" viewBox="0 0 8 12" className="ml-[41px]"><polygon points="0,0 0,12 7,6" fill="#444" /></svg>
            </div>
          </div>
        </div>

        {/* status */}
        <div className="h-[29px] shrink-0 flex items-center justify-between pl-[6px] pr-[19px] pt-[5px] bg-[#f0eeee] border-b-2 border-[#fafafa] text-[16px] text-[#222]">
          <span>Running...</span>
          <span className="whitespace-pre">27-04-2018  22:39</span>
        </div>

        {/* taskbar */}
        <div className="h-[58px] shrink-0 flex items-center border-t border-[#3a2a1c] bg-[linear-gradient(90deg,#3c2413,#6a3f1e_6%,#4a2c14_12%,#7a4c24_24%,#55341a_38%,#825428_50%,#5e3a1c_62%,#7a5028_72%,#3a2212_78%,#6a4420_85%,#4a2e16_92%,#33200f)]">
          <div className="w-[76px] shrink-0 flex justify-center">
            <svg width="56" height="56" viewBox="0 0 56 56">
              <defs><radialGradient id="orb" cx="50%" cy="30%" r="70%"><stop offset="0" stopColor="#9cc6e4" /><stop offset="0.55" stopColor="#2a6ea8" /><stop offset="1" stopColor="#0d3a68" /></radialGradient></defs>
              <circle cx="28" cy="28" r="26" fill="url(#orb)" stroke="#9ec0d8" strokeWidth="1.5" />
              <path d="M15 19 Q21 16 27 19 L26 27 Q20 25 14 27 Z" fill="#e4482c" />
              <path d="M29 20 Q35 22 42 19 L41 28 Q35 30 28 28 Z" fill="#7cc030" />
              <path d="M14 29 Q20 27 26 29 L25 38 Q19 35 13 37 Z" fill="#2c90e0" />
              <path d="M28 30 Q34 32 41 30 L40 39 Q34 41 27 39 Z" fill="#f8c018" />
            </svg>
          </div>
          <div className="w-[10px] shrink-0" />
          <TaskBtn w="w-[71px]">
            <svg width="48" height="50" viewBox="0 0 48 50"><path d="M4 8 H18 L22 13 H44 V46 H4 Z" fill="#f3d98a" stroke="#b09040" /><rect x="8" y="4" width="12" height="8" fill="#fff" /><rect x="10" y="5" width="4" height="4" fill="#2a9a2a" /><rect x="26" y="9" width="12" height="7" fill="#fff" /><rect x="30" y="10" width="4" height="4" fill="#c33" /><path d="M10 24 H40 V46 H34 V32 H16 V46 H10 Z" fill="#6cb8e4" stroke="#3a88b8" /><rect x="20" y="36" width="10" height="10" fill="#a8d8f0" /></svg>
          </TaskBtn>
          <div className="w-[81px] shrink-0 flex justify-center"><Cube /></div>
          <TaskBtn w="w-[70px]">
            <svg width="44" height="44" viewBox="0 0 44 44">
              <path d="M22 22 L4 11 A21 21 0 0 1 41 13 Z" fill="#db4437" />
              <path d="M22 22 L41 13 A21 21 0 0 1 22 43 Z" fill="#f4c20d" />
              <path d="M22 22 L22 43 A21 21 0 0 1 4 11 Z" fill="#0f9d58" />
              <circle cx="22" cy="22" r="10" fill="#fff" /><circle cx="22" cy="22" r="7.5" fill="#4285f4" />
            </svg>
          </TaskBtn>
          <div className="w-[81px] shrink-0 flex justify-center">
            <span className="text-[52px] leading-none font-bold text-[#c87a2c] font-['Liberation_Serif',serif]">E</span>
          </div>
          <TaskBtn w="w-[69px]"><svg width="44" height="44" viewBox="0 0 44 44"><circle cx="22" cy="22" r="21" fill="#5a8ee0" /><path d="M22 1 A21 21 0 0 1 40 32 L30 22 Z" fill="#3b72d0" /><path d="M40 32 A21 21 0 0 1 10 39 L24 30 Z" fill="#9cbcf0" /><circle cx="22" cy="22" r="10" fill="#fff" /><circle cx="22" cy="22" r="7.5" fill="#4a80dc" /></svg></TaskBtn>
          <div className="w-[6px] shrink-0" />
          <TaskBtn w="w-[69px]"><svg width="44" height="44" viewBox="0 0 44 44"><circle cx="22" cy="22" r="21" fill="#6fad3e" /><text x="23" y="37" textAnchor="middle" fontSize="38" fontWeight="700" fill="#fff" className="font-['Liberation_Sans',sans-serif]">µ</text></svg></TaskBtn>
          <div className="w-[6px] shrink-0" />
          <TaskBtn w="w-[63px]"><svg width="50" height="50" viewBox="0 0 50 50"><polygon points="3,2 12,2 12,48 3,48" fill="#fff" /><polygon points="5,4 11,4 11,30 5,30" fill="#d00" /><polygon points="12,24 38,2 48,2 24,30" fill="#fff" /><polygon points="13,26 40,4 46,4 24,28" fill="#e8000e" /><polygon points="12,30 26,30 38,36 38,48 28,48 12,34" fill="#ddd" /><polygon points="24,32 36,34 36,46 28,46" fill="#111" /></svg></TaskBtn>
          <div className="w-[11px] shrink-0" />
          <TaskBtn w="w-[63px]"><svg width="44" height="44" viewBox="0 0 44 44"><rect x="4" y="4" width="36" height="36" fill="#dceef8" /><path d="M7 7 H37 V20 H7Z" fill="#9fd0ee" /><path d="M7 20 Q20 14 37 24 V37 H7Z" fill="#2f6e58" /><path d="M1 10 V1 H10 M34 1 H43 V10 M1 34 V43 H10 M34 43 H43 V34" stroke="#2a78b8" strokeWidth="4" fill="none" /></svg></TaskBtn>
          <div className="w-[13px] shrink-0" />
          <TaskBtn w="w-[70px]"><div className="w-[40px] h-[40px] bg-[#2a0a08] border-[3px] border-[#e8141c] flex items-center justify-center"><svg width="28" height="28" viewBox="0 0 28 28"><path d="M4 24 Q10 18 13 8 Q14 2 15 6 Q14 12 22 18 Q26 20 20 20 Q12 20 6 24 Q3 26 4 24 Z" fill="none" stroke="#eee" strokeWidth="1.4" /></svg></div></TaskBtn>
          <div className="w-[5px] shrink-0" />
          <TaskBtn w="w-[70px]"><Cube /></TaskBtn>
          <div className="w-[5px] shrink-0" />
          <TaskBtn w="w-[69px]"><svg width="46" height="50" viewBox="0 0 46 50"><polygon points="8,3 36,6 40,30 12,32" fill="#e6d838" stroke="#998" /><text x="24" y="24" textAnchor="middle" fontSize="20" fontWeight="700" fill="#2233aa" className="font-['Liberation_Serif',serif]">T</text><polygon points="4,36 32,30 44,42 14,48" fill="#a8a8a8" stroke="#666" /></svg></TaskBtn>
          <div className="w-[6px] shrink-0" />
          <TaskBtn w="w-[70px]"><svg width="48" height="48" viewBox="0 0 48 48"><circle cx="24" cy="24" r="23" fill="#cc2227" /><path d="M10 16 Q20 16 24 24 Q28 32 38 32 M10 32 Q20 32 24 24 Q28 16 38 18" fill="none" stroke="#fff" strokeWidth="6" /></svg></TaskBtn>
          <div className="w-[5px] shrink-0" />
          <TaskBtn w="w-[69px]"><div className="w-[44px] h-[42px] rounded-[4px] bg-[#111] border-2 border-[#ddd] flex items-center justify-center"><svg width="36" height="30" viewBox="0 0 36 30"><rect width="36" height="30" fill="#063" /><path d="M0 10 H36 M0 20 H36 M9 0 V30 M18 0 V30 M27 0 V30" stroke="#0a5" /><path d="M0 15 L8 15 L10 8 L13 22 L16 5 L19 24 L22 10 L25 18 L28 15 H36" stroke="#ff0" fill="none" strokeWidth="1.5" /></svg></div></TaskBtn>
          <div className="w-[5px] shrink-0" />
          <TaskBtn w="w-[70px]" lit><svg width="42" height="50" viewBox="0 0 42 50"><rect x="2" y="2" width="38" height="34" rx="2" fill="#c8c8c8" stroke="#888" /><rect x="6" y="6" width="30" height="26" fill="#444" /><path d="M8 19 H16 L19 12 L22 26 L25 19 H34" stroke="#4d4" fill="none" strokeWidth="1.4" /><rect x="17" y="36" width="8" height="8" fill="#999" /><rect x="10" y="44" width="22" height="4" fill="#bbb" /></svg></TaskBtn>
          <div className="w-[5px] shrink-0" />
          <TaskBtn w="w-[60px]"><svg width="46" height="50" viewBox="0 0 46 50"><polygon points="16,2 42,8 30,48 4,40" fill="#9fd4e4" stroke="#6a9fb8" /><polygon points="16,2 42,8 40,14 14,8" fill="#e8f4f8" /><polygon points="4,40 30,48 31,45 6,37" fill="#fff" /></svg></TaskBtn>
          <div className="w-[19px] shrink-0" />
          <div className="flex items-center">
            {tray.map((t, i) => <div key={i} className="w-[34.6px] shrink-0 flex justify-center">{t}</div>)}
          </div>
          <div className="w-[110px] shrink-0 flex flex-col items-center pt-[3px] text-[16.5px] leading-[25px] text-[#f0f0f0]">
            <span>10:39 PM</span>
            <span>4/27/2018</span>
          </div>
          <div className="ml-auto w-[17px] h-full rounded-[2px] border border-[#ffffff50] bg-[#ffffff28]" />
        </div>
      </div>
    </div>
  );
}
